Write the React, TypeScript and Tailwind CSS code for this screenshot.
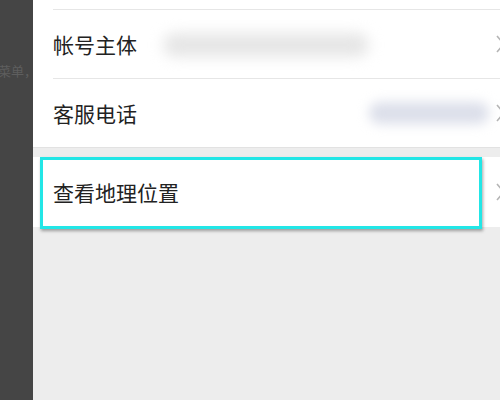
import React from "react";

function Chevron() {
  return (
    <svg width="10" height="18" viewBox="0 0 10 18" className="shrink-0">
      <path d="M1 1 L8 9 L1 17" fill="none" stroke="#b5b5b5" strokeWidth="1.6" />
    </svg>
  );
}

export default function App() {
  const font = { fontFamily: '"Noto Sans CJK SC", "Noto Sans", sans-serif' };
  return (
    <div className="flex w-[500px] h-[400px] overflow-hidden" style={font}>
      <div className="relative w-[33px] shrink-0 bg-[#454545] overflow-hidden">
        <div className="absolute left-[-2px] top-[61px] whitespace-nowrap text-[13px] text-[#5e5e5e]">菜单，</div>
      </div>
      <div className="flex-1 flex flex-col bg-[#ededed] overflow-hidden">
        <div className="bg-white pt-[9px] border-b border-[#e2e2e2]">
          <div className="ml-[20px] border-t border-[#e6e6e6]" />
          <div className="relative h-[68px] flex items-center pl-[20px] pr-0">
            <span className="text-[21px] text-[#222] leading-none">帐号主体</span>
            <div className="absolute left-[130px] top-[23px] w-[206px] h-[24px] rounded-full bg-[#e6e6e6] blur-[7px]" />
            <div className="ml-auto mr-[-6px]"><Chevron /></div>
          </div>
          <div className="ml-[20px] border-t border-[#e6e6e6]" />
          <div className="relative h-[68px] flex items-center pl-[20px]">
            <span className="text-[21px] text-[#222] leading-none">客服电话</span>
            <div className="absolute left-[336px] top-[23px] w-[120px] h-[22px] rounded-full bg-[#dcdfea] blur-[6px]" />
            <div className="ml-auto mr-[-6px]"><Chevron /></div>
          </div>
        </div>
        <div className="h-[9px]" />
        <div className="relative bg-white h-[70px] flex items-center pl-[20px]">
          <span className="text-[21px] text-[#222] leading-none">查看地理位置</span>
          <div className="ml-auto mr-[-6px]"><Chevron /></div>
          <div className="absolute left-[7px] top-0 w-[442px] h-[72px] border-[3px] border-[#22e6e6] shadow-[1px_2px_3px_rgba(0,0,0,0.35)]" />
        </div>
      </div>
    </div>
  );
}
